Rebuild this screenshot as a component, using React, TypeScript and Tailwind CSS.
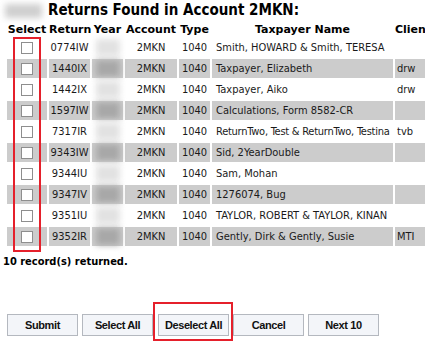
import React from "react";

const rows = [
  ["0774IW", "Smith, HOWARD & Smith, TERESA", ""],
  ["1440IX", "Taxpayer, Elizabeth", "drw"],
  ["1442IX", "Taxpayer, Aiko", "drw"],
  ["1597IW", "Calculations, Form 8582-CR", ""],
  ["7317IR", "ReturnTwo, Test & ReturnTwo, Testina", "tvb"],
  ["9343IW", "Sid, 2YearDouble", ""],
  ["9344IU", "Sam, Mohan", ""],
  ["9347IV", "1276074, Bug", ""],
  ["9351IU", "TAYLOR, ROBERT & TAYLOR, KINAN", ""],
  ["9352IR", "Gently, Dirk & Gently, Susie", "MTI"],
];

function Btn({ children }: { children: React.ReactNode }) {
  return (
    <button className="h-[22px] w-[71px] border border-[#b4b8bf] bg-[#f3f5f9] text-[11px] tracking-[-0.4px] font-bold text-[#111] [font-family:'Liberation_Sans',Arial,sans-serif] [font-stretch:normal] leading-none">
      {children}
    </button>
  );
}

const th =
  "p-0 text-center font-bold whitespace-nowrap [font-family:'DejaVu_Sans',Verdana,sans-serif] [font-stretch:normal]";

export default function App() {
  return (
    <div className="relative w-[425px] h-[344px] overflow-hidden bg-white text-[11px] leading-[13px] text-[#1a1a1a] [font-family:'DejaVu_Sans_Condensed','DejaVu_Sans',Verdana,sans-serif] [font-stretch:condensed]">
      <div className="h-[20px] flex items-center pl-[5px]">
        <div className="w-[37px] h-[14px] bg-[#cfcfcf] blur-[3px] mt-[2px]" />
        <div className="ml-[6px] text-[15px] font-bold text-black leading-none">
          Returns Found in Account 2MKN:
        </div>
      </div>
      <table className="ml-[5px] border-separate border-spacing-[2px] table-fixed w-[432px]">
        <colgroup>
          <col className="w-[40px]" />
          <col className="w-[41px]" />
          <col className="w-[31px]" />
          <col className="w-[52px]" />
          <col className="w-[31px]" />
          <col className="w-[181px]" />
          <col className="w-[40px]" />
        </colgroup>
        <thead>
          <tr className="h-[14px] text-black">
            <th className={th}>Select</th>
            <th className={th}>Return</th>
            <th className={th}>Year</th>
            <th className={th}>Account</th>
            <th className={th}>Type</th>
            <th className={th}>Taxpayer Name</th>
            <th className={`${th} !text-left`}>Client</th>
          </tr>
        </thead>
        <tbody>
          {rows.map(([ret, name, client], i) => {
            const gray = i % 2 === 1;
            const bg = gray ? "bg-[#cccccc]" : "bg-white";
            const tight = name.length > 32 ? "tracking-[-0.25px]" : "";
            return (
              <tr key={ret} className="h-[19px]">
                <td className={`${bg} p-0`}>
                  <div className="mx-auto w-[12px] h-[12px] border border-[#8e8e8e] bg-white" />
                </td>
                <td className={`${bg} p-0 text-center whitespace-nowrap`}>{ret}</td>
                <td className={`${bg} p-0`}>
                  <div
                    className={`mx-auto w-[24px] h-[17px] blur-[3px] ${
                      gray ? "bg-[#a8a8a8]" : "bg-[#e2e2e2]"
                    }`}
                  />
                </td>
                <td className={`${bg} p-0 text-center`}>2MKN</td>
                <td className={`${bg} p-0 text-center`}>1040</td>
                <td className={`${bg} py-0 pl-[4px] pr-0 whitespace-nowrap overflow-hidden ${tight}`}>{name}</td>
                <td className={`${bg} py-0 pl-[2px] pr-0 whitespace-nowrap`}>{client}</td>
              </tr>
            );
          })}
        </tbody>
      </table>
      <div className="mt-[7px] pl-[3px] font-bold text-black">10 record(s) returned.</div>
      <div className="mt-[46px] pl-[7px] flex gap-[4px]">
        <Btn>Submit</Btn>
        <Btn>Select All</Btn>
        <div className="relative ml-[1px]">
          <Btn>Deselect All</Btn>
          <div className="absolute left-[-5px] top-[-12px] right-[-4px] bottom-[-5px] border-2 border-[#e5202b] pointer-events-none" />
        </div>
        <Btn>Cancel</Btn>
        <Btn>Next 10</Btn>
      </div>
      <div className="absolute left-[13px] top-[37px] w-[28px] h-[215px] border-2 border-[#e5202b] pointer-events-none" />
    </div>
  );
}
